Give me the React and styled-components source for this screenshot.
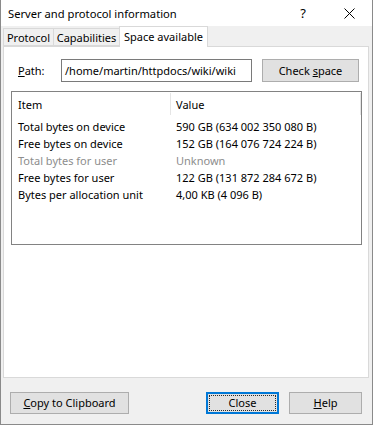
import React from "react";
import styled, { createGlobalStyle } from "styled-components";

const GlobalStyle = createGlobalStyle`
  html, body {
    margin: 0;
    padding: 0;
    background: #f0f0f0;
  }
  body {
    font-family: "Noto Sans", "Liberation Sans", sans-serif;
    font-size: 11px;
    color: #000;
  }
`;

const Window = styled.div`
  width: 373px;
  height: 425px;
  box-sizing: border-box;
  border: 1px solid #8a8a8a;
  border-top: none;
  background: #f0f0f0;
  display: flex;
  flex-direction: column;
`;

const TitleBar = styled.div`
  height: 26px;
  flex-shrink: 0;
  background: #fff;
  display: flex;
  align-items: center;
  padding-left: 7px;
`;

const Title = styled.div`
  flex: 1;
  font-size: 11.2px;
`;

const TitleButton = styled.div`
  width: 46px;
  height: 26px;
  display: flex;
  align-items: center;
  justify-content: center;
  font-size: ${p => p.$size || 13}px;
`;

const Body = styled.div`
  flex: 1;
  display: flex;
  flex-direction: column;
  padding: 0 3px 0 2px;
`;

const TabRow = styled.div`
  height: 20px;
  flex-shrink: 0;
  display: flex;
  align-items: flex-end;
  position: relative;
  z-index: 1;
`;

const Tab = styled.div`
  width: ${p => p.$width}px;
  height: ${p => (p.$active ? 21 : 18)}px;
  box-sizing: border-box;
  margin: ${p => (p.$active ? "0 0 -1px -1px" : "0")};
  padding-bottom: ${p => (p.$active ? 2 : 0)}px;
  display: flex;
  align-items: center;
  justify-content: center;
  border: 1px solid #d9d9d9;
  border-bottom: ${p => (p.$active ? "none" : "1px solid #d9d9d9")};
  border-left: ${p => (p.$first || p.$active ? "1px solid #d9d9d9" : "none")};
  background: ${p => (p.$active ? "#fff" : "#f0f0f0")};
`;

const Panel = styled.div`
  height: 332px;
  flex-shrink: 0;
  box-sizing: border-box;
  background: #fff;
  border: 1px solid #d9d9d9;
  padding: 12px 6px 0 7px;
  display: flex;
  flex-direction: column;
`;

const PathRow = styled.div`
  display: flex;
  align-items: center;
  height: 23px;
`;

const Label = styled.div`
  width: 50px;
  padding-left: 7px;
  box-sizing: border-box;
`;

const TextInput = styled.div`
  width: 191px;
  height: 23px;
  box-sizing: border-box;
  border: 1px solid #7a7a7a;
  padding: 0 3px 1px;
  display: flex;
  align-items: center;
  background: #fff;
  white-space: nowrap;
  overflow: hidden;
`;

const Button = styled.div`
  width: ${p => p.$width}px;
  height: ${p => p.$height || 23}px;
  margin-left: ${p => p.$gap || 0}px;
  box-sizing: border-box;
  background: #e1e1e1;
  border: 1px solid ${p => (p.$focused ? "#0078d7" : "#adadad")};
  padding-bottom: 1px;
  display: flex;
  align-items: center;
  justify-content: center;
  position: relative;
  white-space: nowrap;
  ${p =>
    p.$focused &&
    `
    box-shadow: inset 0 0 0 1px #0078d7;
    &::after {
      content: "";
      position: absolute;
      inset: 2px;
      border: 1px dotted #2a2a2a;
    }
  `}
`;

const ListBox = styled.div`
  margin-top: 9px;
  height: 154px;
  box-sizing: border-box;
  border: 1px solid #828282;
  padding: 1px 0 0 1px;
  display: flex;
  flex-direction: column;
`;

const HeaderRow = styled.div`
  height: 22px;
  display: flex;
  align-items: center;
`;

const HeaderCell = styled.div`
  width: ${p => p.$width}px;
  height: 100%;
  box-sizing: border-box;
  padding-left: 5px;
  display: flex;
  align-items: center;
  border-right: 1px solid #e5e5e5;
`;

const Rows = styled.div`
  padding-top: 3px;
`;

const Row = styled.div`
  height: 17px;
  display: flex;
  align-items: center;
  color: ${p => (p.$dim ? "#8d8d8d" : "#000")};
`;

const Cell = styled.div`
  width: ${p => p.$width}px;
  padding-left: 5px;
  box-sizing: border-box;
  white-space: nowrap;
`;

const Footer = styled.div`
  flex: 1;
  display: flex;
  align-items: flex-start;
  padding: 14px 7px 0 7px;
`;

const Spacer = styled.div`
  flex: 1;
`;

const U = styled.span`
  text-decoration: underline;
`;

const rows = [
  ["Total bytes on device", "590 GB (634 002 350 080 B)"],
  ["Free bytes on device", "152 GB (164 076 724 224 B)"],
  ["Total bytes for user", "Unknown", true],
  ["Free bytes for user", "122 GB (131 872 284 672 B)"],
  ["Bytes per allocation unit", "4,00 KB (4 096 B)"],
];

export default function App() {
  return (
    <>
      <GlobalStyle />
      <Window>
        <TitleBar>
          <Title>Server and protocol information</Title>
          <TitleButton $size={13}>?</TitleButton>
          <TitleButton>
            <svg width="11" height="11" viewBox="0 0 11 11">
              <path d="M0.5 0.5 L10.5 10.5 M10.5 0.5 L0.5 10.5" stroke="#000" strokeWidth="1" />
            </svg>
          </TitleButton>
        </TitleBar>
        <Body>
          <TabRow>
            <Tab $first $width={51}>Protocol</Tab>
            <Tab $width={66}>Capabilities</Tab>
            <Tab $active $width={89}>Space available</Tab>
          </TabRow>
          <Panel>
            <PathRow>
              <Label>
                <U>P</U>ath:
              </Label>
              <TextInput>/home/martin/httpdocs/wiki/wiki</TextInput>
              <Button $width={97} $gap={10}>
                Check&nbsp;<U>s</U>pace
              </Button>
            </PathRow>
            <ListBox>
              <HeaderRow>
                <HeaderCell $width={158}>Item</HeaderCell>
                <HeaderCell $width={190}>Value</HeaderCell>
              </HeaderRow>
              <Rows>
                {rows.map(([item, value, dim]) => (
                  <Row key={item} $dim={dim}>
                    <Cell $width={158}>{item}</Cell>
                    <Cell $width={190}>{value}</Cell>
                  </Row>
                ))}
              </Rows>
            </ListBox>
          </Panel>
          <Footer>
            <Button $width={119} $height={22}>
              <U>C</U>opy to Clipboard
            </Button>
            <Spacer />
            <Button $width={73} $height={22} $focused>
              Close
            </Button>
            <Button $width={73} $height={22} $gap={10}>
              <U>H</U>elp
            </Button>
          </Footer>
        </Body>
      </Window>
    </>
  );
}
